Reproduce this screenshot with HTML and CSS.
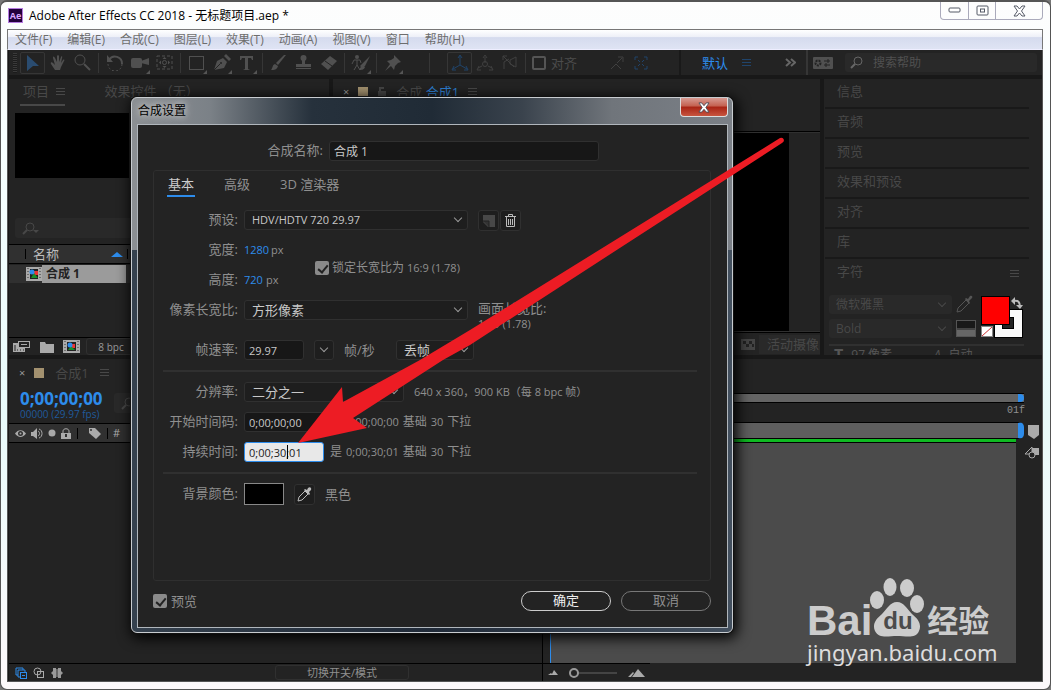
FILE: index.html
```html
<!DOCTYPE html>
<html lang="zh-CN">
<head>
    <meta charset="UTF-8">
    <meta name="viewport" content="width=device-width, initial-scale=1.0">
    <title>Adobe After Effects CC 2018</title>
    <link rel="stylesheet" href="styles.css">
</head>
<body>
<div class="window">
    <header class="titlebar">
        <span class="app-icon">Ae</span>
        <h1>Adobe After Effects CC 2018 - 无标题项目.aep *</h1>
        <div class="win-buttons">
            <button aria-label="最小化"><svg width="13" height="7"><rect x="1" y="1" width="11" height="4" rx="1" fill="#fff" stroke="#555a66"/></svg></button>
            <button aria-label="最大化"><svg width="13" height="11"><rect x="1" y="1" width="11" height="9" rx="1" fill="#fff" stroke="#555a66"/><rect x="4.500" y="4" width="4" height="3" fill="#fff" stroke="#555a66"/></svg></button>
            <button class="wide" aria-label="关闭"><svg width="13" height="12" viewBox="0 0 13 12"><path d="M1 1h3l2.500 3L9 1h3L8.500 6l3.500 5H9L6.500 8 4 11H1l3.500-5z" fill="#fff" stroke="#555a66"/></svg></button>
        </div>
    </header>

    <nav class="menubar">
        <button>文件(F)</button>
        <button>编辑(E)</button>
        <button>合成(C)</button>
        <button>图层(L)</button>
        <button>效果(T)</button>
        <button>动画(A)</button>
        <button>视图(V)</button>
        <button>窗口</button>
        <button>帮助(H)</button>
    </nav>

    <div class="app">
        <div class="toolbar">
            <div class="tools">
                <span class="grip"></span>
                <button class="tool boxed" aria-label="选取"><svg width="14" height="18"><path d="M1 1l12 11H7l-6 5z" fill="#2a4c70"/></svg></button>
                <button class="tool" aria-label="手形"><svg width="16" height="16"><path d="M5 15L1 9c-1-2 1-2 2-1l2 2L3 3c0-2 1-2 2 0l2 4V1c0-1 2-1 2 0v6l2-5c0-1 2-1 1 1l-1 5 2-3c1-1 2 0 1 1l-3 6-1 3z" fill="#505050"/></svg></button>
                <button class="tool" aria-label="缩放"><svg width="17" height="17"><circle cx="6" cy="6" r="5" fill="none" stroke="#505050"/><path d="M10 10l6 6" stroke="#505050" stroke-width="2"/></svg></button>
                <i class="sep"></i>
                <button class="tool" aria-label="旋转"><svg width="18" height="17"><path d="M3 6a7 7 0 0 1 13 4" fill="none" stroke="#505050" stroke-width="2"/><path d="M1 1v7h6z" fill="#505050"/><path d="M16 10a7 7 0 0 1-14 0" fill="none" stroke="#505050" stroke-dasharray="2 2"/></svg></button>
                <button class="tool more" aria-label="摄像机"><svg width="18" height="12"><rect y="1" width="11" height="10" rx="2" fill="#505050"/><path d="M10 4l8-3v7l-8-2z" fill="#505050"/></svg></button>
                <button class="tool" aria-label="锚点"><svg width="18" height="16"><rect x="1" y="1" width="15" height="13" fill="none" stroke="#505050" stroke-dasharray="3 2"/><circle cx="8.500" cy="7.500" r="2" fill="none" stroke="#505050"/><path d="M8.500 2l2 2h-4zM8.500 13l2-2h-4zM3 7.500l2-2v4zM14 7.500l-2-2v4z" fill="#505050"/></svg></button>
                <i class="sep"></i>
                <button class="tool more" aria-label="矩形"><svg width="17" height="16"><rect x="1.500" y="1.500" width="14" height="13" fill="none" stroke="#505050"/></svg></button>
                <button class="tool more" aria-label="钢笔"><svg width="18" height="18"><path d="M1 16L4 7l6-3 4 4-3 6z" fill="#505050"/><path d="M11 2l2-2 5 5-2 2z" fill="#505050"/><path d="M1 16l6-6" stroke="#232323"/><circle cx="8" cy="9" r="1" fill="#232323"/></svg></button>
                <button class="tool more" aria-label="文字"><svg width="15" height="16"><path d="M1 1h13v4h-1l-1-2H9v11l2 1H4l2-1V3H3L2 5H1z" fill="#505050"/></svg></button>
                <i class="sep"></i>
                <button class="tool" aria-label="画笔"><svg width="17" height="17"><path d="M16 1L8 11 6 9 14 1z" fill="#505050"/><path d="M5 10l3 2c-1 4-4 4-7 4 2-2 1-5 4-6z" fill="#505050"/></svg></button>
                <button class="tool" aria-label="仿制图章"><svg width="17" height="16"><circle cx="8.500" cy="3" r="3" fill="#505050"/><path d="M7 4h3v5h6v3H1V9h6zM1 13h15v1H1z" fill="#505050"/></svg></button>
                <button class="tool" aria-label="橡皮擦"><svg width="18" height="16"><path d="M1 9l9-8 7 5-9 9z" fill="#505050"/><path d="M5 6l7 5" stroke="#232323"/></svg></button>
                <i class="sep"></i>
                <button class="tool more" aria-label="Roto 笔刷"><svg width="20" height="16"><circle cx="6" cy="2" r="2" fill="#505050"/><path d="M1 9l2-4h6l1 3M6 5v5l-3 5M6 10l3 5" fill="none" stroke="#505050"/><path d="M19 1l-5 10-3 2-2-2 3-3z" fill="#505050"/><path d="M11 10l3 2c-1 3-4 3-6 3z" fill="#505050"/></svg></button>
                <i class="sep"></i>
                <button class="tool more" aria-label="操控点"><svg width="16" height="16"><path d="M9 0l7 7-3 1-3 3-1 4-3-4-6 5 5-7-3-3 4-1 3-2z" fill="#505050"/></svg></button>
            </div>
            <div class="axes">
                <i class="sep"></i>
                <button class="tool boxed" aria-label="本地轴"><svg width="18" height="18"><path d="M9 2v9l-7 4M9 11l7 4M7 4l2-3 2 3M3 12l-2 4h4M15 12l2 4h-4" fill="none" stroke="#20446b"/></svg></button>
                <button class="tool" aria-label="世界轴"><svg width="18" height="16"><path d="M9 2v6M6 11l-4 2M12 11l4 2M7 3l2-3 2 3M3 11l-2 4h4M15 11l2 4h-4" fill="none" stroke="#404040"/><circle cx="9" cy="9" r="2.500" fill="none" stroke="#404040"/></svg></button>
                <button class="tool" aria-label="视图轴"><svg width="16" height="16"><path d="M2 14V7l5-3M8 5l6-3v10l-6-3zM1 1l11 11M1 5V1h4" fill="none" stroke="#404040"/></svg></button>
                <i class="sep"></i>
                <label class="snap"><input type="checkbox">对齐</label>
                <svg width="14" height="14"><path d="M1 13l5-5 5 5M7 7l5-5M8 1h5v5" fill="none" stroke="#404040"/></svg>
                <svg width="14" height="14"><path d="M1 4V1h3M10 1h3v3M1 10v3h3M10 13h3v-3M4 4l2 2M10 4L8 6M4 10l2-2M10 10L8 8" fill="none" stroke="#20446b"/></svg>
            </div>
            <div class="workspace">
                <button class="ws-name">默认</button>
                <span class="burger blue"></span>
                <button class="ws-more" aria-label="更多工作区"><svg width="11" height="9"><path d="M1 1l4 3.500L1 8M6 1l4 3.500L6 8" fill="none" stroke="#666" stroke-width="2"/></svg></button>
            </div>
            <div class="help">
                <svg width="20" height="12"><rect width="20" height="12" rx="1" fill="#505050"/><circle cx="5" cy="6" r="2.500" fill="none" stroke="#232323" stroke-width="2" stroke-dasharray="2 1"/><path d="M11 4h6M15 2v4M11 8h6M13 6v4" stroke="#232323"/></svg>
                <label class="help-search">
                    <svg width="13" height="13"><circle cx="8" cy="5" r="4" fill="none" stroke="#666"/><path d="M5 8l-4 4" stroke="#666" stroke-width="2"/></svg>
                    <input type="text" placeholder="搜索帮助" aria-label="搜索帮助">
                </label>
            </div>
        </div>

        <div class="panels">
            <section class="panel project">
                <div class="tabs">
                    <span class="tab current">项目 <i class="burger"></i></span>
                    <span class="tab">效果控件 （无）</span>
                </div>
                <div class="thumb"></div>
                <label class="search"><svg width="18" height="13"><circle cx="8" cy="5" r="4" fill="none" stroke="#484848"/><path d="M5 8l-4 4" stroke="#484848" stroke-width="2"/><path d="M11 8h6l-3 3z" fill="#484848"/></svg><input type="text" aria-label="搜索"></label>
                <div class="list-head"><i></i><span>名称</span><b class="sort"></b><i></i></div>
                <div class="list-row">
                    <svg class="comp-icon" width="16" height="14"><rect width="16" height="14" fill="#aaa"/><path d="M2 1v12M14 1v12" stroke="#333" stroke-dasharray="1 2"/><rect x="4" y="2" width="8" height="10" fill="#222"/><rect x="8" y="4" width="4" height="4" fill="#e33"/><path d="M8 6l4 5H5z" fill="#1a8f2a"/><circle cx="6" cy="5" r="2.500" fill="#2d8ceb"/></svg>
                    <span>合成 1</span>
                </div>
                <div class="project-foot">
                    <svg width="18" height="13"><path d="M0 3h5v5h7v4H0z" fill="#aaa"/><path d="M2 5v6M4 10h1M7 10h1M10 10h1" stroke="#232323"/><rect x="5.500" y="1.500" width="11" height="6" fill="#232323" stroke="#aaa"/><path d="M8 4.500h6" stroke="#aaa"/></svg>
                    <svg width="14" height="12"><path d="M0 1h5l1 2h8v9H0z" fill="#aaa"/></svg>
                    <svg width="17" height="13"><rect width="17" height="13" fill="#aaa"/><path d="M2 1v11M15 1v11" stroke="#333" stroke-dasharray="1 2"/><rect x="4" y="2" width="9" height="9" fill="#222"/><rect x="8" y="4" width="4" height="4" fill="#e33"/><path d="M8 6l4 4H5z" fill="#1a8f2a"/><circle cx="7" cy="5" r="2.500" fill="#2d8ceb"/></svg>
                    <button>8 bpc</button>
                </div>
            </section>

            <section class="panel comp">
                <div class="comp-tabs">
                    <span class="close-x">×</span><i class="swatch"></i>
                    <svg width="10" height="12"><rect x="1" y="5" width="8" height="6" fill="#454545"/><path d="M3 5V2h4" fill="none" stroke="#454545" stroke-width="2"/></svg>
                    <span>合成 <b>合成1</b></span> <i class="burger"></i>
                </div>
                <div class="viewer"></div>
                <div class="comp-foot">
                    <svg width="14" height="11"><rect width="14" height="11" fill="#444"/><path d="M2 2h3v3H2zM8 2h3v3H8zM5 5h3v3H5zM11 5h2v3h-2z" fill="#222"/></svg>
                    <button>活动摄像</button>
                </div>
            </section>

            <section class="panel side">
                <h2>信息</h2>
                <h2>音频</h2>
                <h2>预览</h2>
                <h2>效果和预设</h2>
                <h2>对齐</h2>
                <h2>库</h2>
                <h2 class="open">字符 <i class="burger"></i></h2>
                <div class="character">
                    <div class="fonts">
                        <span class="select"><select aria-label="字体"><option>微软雅黑</option></select></span>
                        <span class="select"><select aria-label="样式"><option>Bold</option></select></span>
                    </div>
                    <div class="picks">
                        <svg width="17" height="18"><path d="M1 17l1-4 8-8 3 3-8 8z" fill="none" stroke="#555"/><path d="M9 4l1-1 2 1 2-3c2-1 3 1 2 2l-3 3 1 2-1 1z" fill="#555"/></svg>
                        <span class="bw"></span>
                    </div>
                    <svg class="fill-stroke" width="44" height="44"><rect x="14.500" y="14.500" width="28" height="28" fill="#fafafa" stroke="#000"/><rect x="22.500" y="22.500" width="11" height="11" fill="#232323" stroke="#000"/><rect x="1.500" y="1.500" width="28" height="28" fill="#f00" stroke="#000"/><rect x="1.500" y="31.500" width="11" height="10" fill="#fff" stroke="#888"/><path d="M2 41L12 32" stroke="#c33"/><path d="M34 6c4-1 6 1 6 6" fill="none" stroke="#bbb" stroke-width="2"/><path d="M35 2v8l-4-4zM36 10h7l-3 4z" fill="#bbb"/></svg>
                </div>
                <div class="metrics"><b>T</b><span>97 像素</span><i>–</i><em>A</em><span>自动</span><i>–</i></div>
            </section>
        </div>

        <section class="timeline">
            <div class="layers">
                <div class="comp-tabs"><span class="close-x">×</span><i class="swatch"></i><span>合成1</span><i class="burger"></i></div>
                <div class="time">
                    <div><strong>0;00;00;00</strong><small>00000 (29.97 fps)</small></div>
                    <label class="search"><svg width="13" height="13"><circle cx="8" cy="5" r="4" fill="none" stroke="#484848"/><path d="M5 8l-4 4" stroke="#484848" stroke-width="2"/></svg><input type="text" aria-label="搜索图层"></label>
                </div>
                <div class="switches">
                    <svg width="11" height="9"><path d="M0 4.500C3 0 8 0 11 4.500 8 9 3 9 0 4.500z" fill="#aaa"/><circle cx="5.500" cy="4.500" r="2.500" fill="#303030"/><circle cx="5.500" cy="4.500" r="1" fill="#aaa"/></svg>
                    <svg width="12" height="11"><path d="M0 4h2l4-4v11L2 8H0z" fill="#aaa"/><path d="M7 3c2 1 2 4 0 5M8 1c4 1 4 8 0 9" fill="none" stroke="#aaa"/></svg>
                    <svg width="8" height="8"><circle cx="4" cy="4" r="3.500" fill="#aaa"/></svg>
                    <svg width="10" height="11"><rect y="5" width="10" height="6" fill="#aaa"/><path d="M2 5V3c0-3 6-3 6 0v2" fill="none" stroke="#aaa"/><path d="M5 6v3" stroke="#303030" stroke-width="2"/></svg>
                    <i></i>
                    <svg width="13" height="13"><path d="M1 1h6l6 6-5 5-7-6z" fill="#aaa"/><circle cx="3" cy="3" r="1" fill="#303030"/></svg>
                    <i></i>
                    <span>#</span>
                </div>
                <div class="layer-list"></div>
                <div class="layer-foot">
                    <svg width="12" height="12"><path d="M8 3V1H1v7h2" fill="none" stroke="#2d8ceb"/><path d="M10 5V3H3v7h2" fill="none" stroke="#2d8ceb"/><rect x="5.500" y="5.500" width="6" height="6" fill="none" stroke="#2d8ceb"/><path d="M7 8h3v1H7z" fill="#2d8ceb"/></svg>
                    <svg width="12" height="12"><circle cx="4.500" cy="4.500" r="3.500" fill="none" stroke="#aaa"/><rect x="4.500" y="4.500" width="6" height="6" fill="none" stroke="#aaa"/></svg>
                    <svg width="12" height="12"><path d="M2 1h3v10H2V8L0 6l2-2zM10 1H7v10h3V8l2-2-2-2z" fill="#999"/><path d="M5 2h2v8H5z" fill="#666"/></svg>
                    <button>切换开关/模式</button>
                </div>
            </div>
            <div class="tracks">
                <div class="navigator"><span></span></div>
                <div class="ruler">01f</div>
                <div class="workarea"><span></span><svg width="11" height="14"><path d="M0 0h11v10l-5 4-6-4z" fill="#aaa"/></svg></div>
                <div class="track-body">
                    <div class="track-gray"></div>
                    <svg width="15" height="14"><rect x="7" y="2" width="7" height="7" fill="#aaa"/><path d="M0 8l7-7v7z" fill="#232323" stroke="#aaa"/><circle cx="7" cy="9" r="3" fill="#232323" stroke="#aaa"/></svg>
                </div>
                <div class="zoomer">
                    <svg width="10" height="5"><path d="M0 5l3-2 1 1 2-4 4 5z" fill="#aaa"/></svg>
                    <input type="range" min="0" max="100" value="0" aria-label="缩放">
                    <svg width="17" height="8"><path d="M0 8l5-5 1 1-3 4zM4 8l6-8 7 8z" fill="#aaa"/></svg>
                </div>
            </div>
        </section>
    </div>

    <div class="dialog" role="dialog" aria-labelledby="dlg-title">
        <div class="dialog-title">
            <h2 id="dlg-title">合成设置</h2>
            <button aria-label="关闭"><svg width="12" height="11" viewBox="0 0 13 12"><path d="M1 1h3l2.500 3L9 1h3L8.500 6l3.500 5H9L6.500 8 4 11H1l3.500-5z" fill="#fff" stroke="#4a4f5c"/></svg></button>
        </div>
        <form class="dialog-body">
            <div class="name-row">
                <label for="name">合成名称:</label>
                <input id="name" type="text" value="合成 1">
            </div>
            <div class="settings">
                <div class="dlg-tabs">
                    <button type="button" class="on">基本</button>
                    <button type="button">高级</button>
                    <button type="button">3D 渲染器</button>
                </div>
                <div class="row">
                    <label for="preset">预设:</label>
                    <div>
                        <span class="select w-full"><select id="preset"><option>HDV/HDTV 720 29.97</option></select></span>
                        <span class="pair">
                            <button type="button" class="sq" aria-label="保存预设"><svg width="13" height="13"><path d="M1 1h12v12H6L1 8z" fill="#484848"/><path d="M1 7h6v6" fill="#333" stroke="#232323"/></svg></button>
                            <button type="button" class="sq" aria-label="删除预设"><svg width="11" height="13"><path d="M0 2.500h11M3.500 2V.500h4V2M1.500 3v9.500h8V3M3.500 5v6M5.500 5v6M7.500 5v6" fill="none" stroke="#bbb"/></svg></button>
                        </span>
                    </div>
                </div>
                <div class="size">
                    <div>
                        <div class="row"><label for="w">宽度:</label><div><input id="w" class="num wide-num" value="1280"><span>px</span></div></div>
                        <div class="row"><label for="h">高度:</label><div><input id="h" class="num" value="720"><span>px</span></div></div>
                    </div>
                    <label class="check"><input type="checkbox" checked>锁定长宽比为 <small>16:9 (1.78)</small></label>
                </div>
                <div class="row">
                    <label for="par">像素长宽比:</label>
                    <div>
                        <span class="select w-full"><select id="par" class="cjk"><option>方形像素</option></select></span>
                        <span class="frame-ratio">画面长宽比:<small>16:9 (1.78)</small></span>
                    </div>
                </div>
                <div class="row rate">
                    <label for="fps">帧速率:</label>
                    <div>
                        <input id="fps" type="text" value="29.97">
                        <span class="select w-mini"><select aria-label="帧速率预设"><option></option></select></span>
                        <span class="unit">帧/秒</span>
                        <span class="select w-drop"><select class="cjk" aria-label="丢帧"><option>丢帧</option></select></span>
                    </div>
                </div>
                <hr>
                <div class="row">
                    <label for="res">分辨率:</label>
                    <div>
                        <span class="select w-res"><select id="res" class="cjk"><option>二分之一</option></select></span>
                        <small>640 x 360，900 KB（每 8 bpc 帧）</small>
                    </div>
                </div>
                <div class="row">
                    <label for="start">开始时间码:</label>
                    <div><input id="start" class="tc" type="text" value="0;00;00;00"><span class="after">是 <small>0;00;00;00</small> 基础 <small>30</small> 下拉</span></div>
                </div>
                <div class="row">
                    <label for="dur">持续时间:</label>
                    <div><span class="caret"><input id="dur" class="tc active" type="text" value="0;00;30;01"></span><span class="after">是 <small>0;00;30;01</small> 基础 <small>30</small> 下拉</span></div>
                </div>
                <hr>
                <div class="row last">
                    <label for="bg">背景颜色:</label>
                    <div>
                        <button type="button" id="bg" class="color" aria-label="背景颜色"></button>
                        <button type="button" class="sq" aria-label="吸管"><svg width="15" height="16"><path d="M1 15l1-4 6-6 3 3-6 6z" fill="none" stroke="#bbb"/><path d="M7 4l1-1 2 1 1-2c2-2 4 0 3 2l-2 2 1 2-1 1z" fill="#bbb"/></svg></button>
                        <span>黑色</span>
                    </div>
                </div>
            </div>
            <div class="dialog-foot">
                <label class="check"><input type="checkbox" checked>预览</label>
                <button type="button" class="ok">确定</button>
                <button type="button">取消</button>
            </div>
        </form>
    </div>

    <div class="watermark">
        <div class="logo">
            <span class="bai">Bai</span>
            <span class="paw">
                <svg width="56" height="60" viewBox="0 0 56 60"><g fill="#ccc"><ellipse cx="7" cy="22" rx="7" ry="9"/><ellipse cx="20" cy="9" rx="6.500" ry="9"/><ellipse cx="37" cy="10" rx="7" ry="9"/><ellipse cx="47" cy="26" rx="7" ry="9"/><path d="M27 24c7 0 10 7 15 12 6 5 10 10 7 17-3 8-13 5-22 5s-18 3-22-5c-3-7 1-12 7-17 5-5 8-12 15-12z"/></g></svg>
                <span class="du">du</span>
            </span>
            <span class="jy">经验</span>
        </div>
        <div class="url">jingyan.baidu.com</div>
    </div>

    <svg class="arrow" width="490" height="310" viewBox="296 136 490 310" aria-hidden="true">
        <path d="M298 443L342 387l1 15L420 360 470 330 780 138q3-1 4 2 0 2-2 3L470 345 443 360 353 418l14 10z" fill="#ed1c24"/>
    </svg>
</div>
</body>
</html>
```
FILE: styles.css
```css
* {
    margin: 0;
    padding: 0;
    box-sizing: border-box;
}
body {
    font-family: "Open Sans", "Noto Sans CJK SC", sans-serif;
    font-size: 13px;
    line-height: 18px;
    color: #8f8f8f;
    background: #777;
}
button, input, select {
    font: inherit;
    color: inherit;
    background: none;
    border: 0;
    min-width: 0;
    outline: none;
}
h1, h2, strong {
    font-weight: normal;
}
svg {
    display: block;
    flex: none;
}
.window {
    position: relative;
    display: flex;
    flex-direction: column;
    height: 100vh;
    min-height: 690px;
    padding: 0 7px 7px 6px;
    border: 1px solid #555;
    border-top-width: 2px;
    border-radius: 7px;
    background: linear-gradient(#fdfdfd, #f7ffff 20%, #e8fafa 60%, #fdf9fb);
    overflow: hidden;
}

/* title bar */
.titlebar {
    display: flex;
    align-items: center;
    height: 27px;
    padding-left: 1px;
    flex: none;
}
.app-icon {
    width: 15px;
    height: 15px;
    background: #24003d;
    border: 1px solid #b57be0;
    color: #d9a6ff;
    font-size: 9px;
    line-height: 13px;
    text-align: center;
    font-weight: bold;
}
h1 {
    flex: 1;
    margin-left: 6px;
    font-size: 12px;
    color: #000;
}
.win-buttons {
    display: flex;
    align-self: flex-start;
    height: 18px;
    border: 1px solid #aab;
    border-top: 0;
    border-radius: 0 0 4px 4px;
}
.win-buttons button {
    display: flex;
    justify-content: center;
    align-items: center;
    width: 27px;
}
.win-buttons button + button {
    border-left: 1px solid #aab;
}
.win-buttons .wide {
    width: 47px;
}

.menubar {
    display: flex;
    flex: none;
    gap: 15px;
    height: 21px;
    padding-left: 7px;
    border: 1px solid #777;
    border-bottom-color: #eef;
    background: linear-gradient(#fff, #eef0f8 35%, #d5dbee 40%, #dfe4f4);
    font-size: 12px;
    color: #6d6d6d;
}

/* application area */
.app {
    flex: 1;
    display: flex;
    flex-direction: column;
    gap: 4px;
    min-height: 0;
    padding-left: 1px;
    border: 1px solid #555;
    border-top: 0;
    background: #181818;
}
.toolbar {
    display: flex;
    height: 25px;
    background: #232323;
    color: #4c4c4c;
}
.toolbar > div {
    display: flex;
    align-items: center;
}
.tools {
    width: 400px;
}
.grip {
    width: 4px;
    height: 20px;
    margin: 0 3px 0 4px;
    background: repeating-linear-gradient(#3a3a3a 0 1px, #1c1c1c 1px 2px);
}
.tool {
    position: relative;
    display: flex;
    justify-content: center;
    align-items: center;
    width: 25px;
    height: 22px;
    flex: none;
}
.boxed {
    border: 1px solid #363636;
    border-radius: 2px;
}
.more::after {
    content: "";
    position: absolute;
    right: 2px;
    bottom: 0;
    border: 2px solid;
    border-color: transparent #555 #555 transparent;
}
.sep {
    width: 1px;
    height: 20px;
    margin: 0 3px;
    background: #363636;
    flex: none;
}
.axes {
    flex: 1;
    padding-left: 17px;
}
.axes .boxed {
    margin-left: 14px;
}
.axes .sep + .snap {
    margin: 0 33px 0 3px;
}
.axes > svg {
    margin-right: 10px;
}
.snap {
    display: flex;
    align-items: center;
    gap: 5px;
}
.snap input {
    appearance: none;
    width: 14px;
    height: 14px;
    border: 2px solid #555;
    border-radius: 2px;
}
.workspace {
    width: 127px;
    border-left: 2px solid #191919;
    padding-left: 21px;
}
.ws-name {
    color: #2d8ceb;
}
.ws-more {
    margin-left: auto;
    padding-right: 10px;
}
.burger {
    display: inline-block;
    width: 9px;
    height: 8px;
    margin-left: 8px;
    background: repeating-linear-gradient(currentColor 0 1px, transparent 1px 3px);
}
.blue {
    color: #20446b;
    margin-left: 14px;
}
.help {
    width: 236px;
    gap: 12px;
    padding: 0 5px;
    border-left: 2px solid #363636;
}
.help-search {
    flex: 1;
    display: flex;
    align-items: center;
    gap: 10px;
    height: 19px;
    padding: 0 5px;
    border-radius: 3px;
    background: #292929;
}
.help-search input {
    flex: 1;
    font-size: 12px;
}
::placeholder {
    color: #505050;
}

.panels {
    display: grid;
    grid-template-columns: 320px 1fr 218px;
    gap: 4px;
    height: 276px;
    flex: none;
}
.panel {
    display: flex;
    flex-direction: column;
    background: #232323;
    color: #484848;
    overflow: hidden;
    min-width: 0;
}
.tabs {
    display: flex;
    gap: 36px;
    height: 27px;
    padding-left: 11px;
}
.tab {
    padding: 3px 0 3px 3px;
    white-space: nowrap;
}
.current {
    border-bottom: 2px solid #484848;
}
.current .burger {
    margin-left: 4px;
}
.thumb {
    width: 114px;
    height: 65px;
    margin: 7px 6px 40px;
    background: #000;
}
.search {
    display: flex;
    align-items: center;
    height: 20px;
    margin-left: 6px;
    padding-left: 7px;
    border-radius: 3px;
    background: #292929;
}
.list-head {
    display: flex;
    align-items: center;
    height: 20px;
    margin-top: 6px;
    padding: 0 4px 0 16px;
    border: solid #000;
    border-width: 1px 0;
    background: #303030;
    color: #bbb;
}
.list-head i {
    width: 1px;
    height: 10px;
    background: #000;
}
.list-head span {
    width: 85px;
    padding-left: 7px;
}
.sort {
    border: 6px solid transparent;
    border-top: 0;
    border-bottom: 5px solid #2d8ceb;
    margin-right: 4px;
}
.list-row {
    display: flex;
    align-items: center;
    height: 18px;
    margin-top: 1px;
    padding-left: 17px;
    background: #303030;
}
.list-row span {
    width: 84px;
    height: 18px;
    padding-left: 4px;
    background: #9b9b9b;
    color: #222;
    font-size: 12px;
    font-weight: bold;
}
.project-foot {
    display: flex;
    align-items: center;
    gap: 9px;
    height: 18px;
    margin-top: auto;
    padding-left: 4px;
    border-top: 1px solid #000;
    color: #999;
}
.project-foot button {
    width: 60px;
    height: 17px;
    padding-right: 10px;
    margin-left: -3px;
    border: 1px solid #303030;
    border-radius: 3px;
    font-size: 10px;
    line-height: 14px;
}
.comp-tabs {
    display: flex;
    align-items: center;
    gap: 9px;
    height: 25px;
    padding-left: 10px;
    color: #484848;
    flex: none;
}
.comp-tabs b {
    color: #2d7fd2;
    font-weight: normal;
}
.comp-tabs .burger {
    margin: 0;
}
.close-x {
    color: #999;
    font-size: 11px;
}
.swatch {
    width: 10px;
    height: 10px;
    background: #a3916f;
}
.viewer {
    flex: 1;
    margin-top: 27px;
    background: linear-gradient(90deg, #000 calc(100% - 31px), #232323 0);
    border: solid #000;
    border-width: 1px 0;
    box-shadow: inset 0 1px #303030, inset 0 -1px #303030;
}
.comp-foot {
    display: flex;
    align-items: center;
    justify-content: flex-end;
    gap: 4px;
    height: 22px;
}
.comp-foot button {
    width: 61px;
    height: 19px;
    padding-left: 8px;
    overflow: hidden;
    white-space: nowrap;
    background: #292929;
    text-align: left;
}
.side h2 {
    flex: none;
    height: 30px;
    margin: 0 13px 0 1px;
    padding: 3px 12px;
    font-size: 13px;
    border-bottom: 2px solid #191919;
}
.side .open {
    display: flex;
    justify-content: space-between;
    border: 0;
    padding-right: 10px;
    height: 36px;
}
.side .open .burger {
    margin-top: 8px;
}
.character {
    display: flex;
    gap: 4px;
    padding-left: 5px;
    height: 46px;
    flex: none;
}
.fonts {
    display: flex;
    flex-direction: column;
    gap: 5px;
    width: 123px;
}
.fonts .select {
    height: 19px;
}
.picks {
    display: flex;
    flex-direction: column;
    gap: 7px;
}
.bw {
    width: 20px;
    height: 17px;
    border: 1px solid #555;
    background: linear-gradient(#191919 50%, #444 50% 60%, #666 60%);
}
.metrics {
    display: flex;
    align-items: flex-start;
    flex: none;
    gap: 8px;
    margin: 3px 18px 0 5px;
    padding: 0 5px;
    border-top: 2px solid #303030;
    color: #555;
    font-size: 12px;
}
.metrics b {
    font-size: 16px;
}
.metrics i {
    margin: 0 14px 0 6px;
}

/* timeline */
.timeline {
    flex: 1;
    min-height: 0;
    display: grid;
    grid-template-columns: 534px 1fr;
    background: #232323;
}
.layers, .tracks {
    display: flex;
    flex-direction: column;
    min-width: 0;
}
.layers {
    border-right: 1px solid #000;
}
.timeline .comp-tabs {
    height: 28px;
    gap: 11px;
}
.timeline .close-x {
    margin-right: -2px;
}
.time {
    display: flex;
    justify-content: space-between;
    height: 36px;
    padding: 3px 0 0 11px;
}
.time strong {
    display: block;
    font-size: 17px;
    font-weight: bold;
    line-height: 18px;
    color: #2d8ceb;
}
.time small {
    display: block;
    font-size: 10px;
    line-height: 12px;
    color: #205a9b;
}
.time .search {
    width: 428px;
    margin-top: 3px;
}
.switches {
    display: flex;
    align-items: center;
    gap: 5px;
    height: 20px;
    padding-left: 6px;
    border: solid #000;
    border-width: 1px 0;
    background: #303030;
    font-size: 11px;
    color: #aaa;
    flex: none;
}
.switches i {
    width: 1px;
    height: 11px;
    margin: 0 5px 0 1px;
    background: #000;
}
.switches i + span {
    margin-left: -5px;
}
.layer-list {
    flex: 1;
}
.layer-foot {
    display: flex;
    align-items: center;
    gap: 6px;
    height: 18px;
    padding-left: 6px;
    border-top: 1px solid #000;
    flex: none;
}
.layer-foot button {
    width: 134px;
    height: 15px;
    margin-left: 206px;
    border: 1px solid #303030;
    border-radius: 3px;
    font-size: 11px;
    line-height: 12px;
}
.navigator {
    height: 10px;
    margin: 34px 18px 0 8px;
    border: solid #000;
    border-width: 1px 0;
    background: #646464;
}
.navigator span, .workarea span {
    display: block;
    height: 100%;
    border-right: 6px solid #2d8ceb;
    border-radius: 0 5px 5px 0;
}
.ruler {
    height: 19px;
    margin-right: 17px;
    padding-top: 1px;
    text-align: right;
    font: 10px/14px "Liberation Mono", monospace;
}
.workarea {
    display: flex;
    gap: 4px;
    height: 17px;
    margin: 0 3px 0 8px;
}
.workarea span {
    flex: 1;
    height: 17px;
    border-top: 1px solid #000;
    border-bottom: 1px solid #000;
    background: #5e5e5e;
}
.workarea svg {
    margin-top: 3px;
}
.track-body {
    flex: 1;
    display: flex;
    justify-content: space-between;
    margin-left: 7px;
    border-left: 1px solid #2d8ceb;
}
.track-gray {
    flex: 1;
    margin-right: 9px;
    border-top: 3px solid #0fba22;
    background: #4b4b4b;
    box-shadow: inset 0 1px #000;
}
.track-body svg {
    margin: 7px 2px 0 0;
}
.zoomer {
    display: flex;
    align-items: center;
    gap: 11px;
    width: 107px;
    height: 18px;
    padding: 0 5px;
    border-top: 1px solid #000;
    flex: none;
}
.zoomer input {
    appearance: none;
    width: 48px;
    height: 2px;
    background: #444;
}
.zoomer input::-webkit-slider-thumb {
    appearance: none;
    width: 10px;
    height: 10px;
    border: 2px solid #999;
    border-radius: 50%;
    background: #232323;
}

/* composition settings dialog */
.dialog {
    position: absolute;
    left: 130px;
    top: 95px;
    width: 602px;
    padding: 0 4px 4px 5px;
    border: 1px solid #c8ccd0;
    border-radius: 6px;
    background: linear-gradient(90deg, #8b8f93, #7b8187 13%, #26313c 30%, #202b36 50%, #3a434d 65%, #70757b 80%, #7b8087);
    box-shadow: 0 0 0 1px #111, 2px 3px 14px 2px #000;
}
.dialog::before {
    content: "";
    position: absolute;
    inset: 152px 0 0;
    border-radius: 0 0 5px 5px;
    background: linear-gradient(90deg, #35414e, #202a38 50%, #43505f);
}
.dialog-title {
    display: flex;
    justify-content: space-between;
    align-items: flex-start;
    height: 26px;
}
.dialog-title h2 {
    padding: 4px 1px;
    font-size: 12px;
    color: #000;
    text-shadow: 0 0 6px #ccc, 0 0 8px #ccc;
}
.dialog-title button {
    display: flex;
    justify-content: center;
    align-items: center;
    width: 48px;
    height: 19px;
    border: 1px solid #ddd;
    border-top: 0;
    border-radius: 0 0 4px 4px;
    background: linear-gradient(#d79a92, #c4604f 45%, #a82314 50%, #c8553f);
}
.dialog-body {
    position: relative;
    padding: 16px 16px 16px 15px;
    border: 1px solid #b0b6bc;
    background: #232323;
}
.dialog input[type="text"] {
    height: 20px;
    padding: 0 4px;
    border: 1px solid #303030;
    border-radius: 3px;
    background: #171717;
    color: #c8c8c8;
    font-size: 11px;
}
.name-row {
    display: grid;
    grid-template-columns: 170px 270px;
    gap: 6px;
}
.name-row label, .row > label {
    text-align: right;
}
.dialog .name-row input {
    font-size: 12px;
}
.settings {
    height: 411px;
    margin-top: 9px;
    border: 1px solid #2f2f2f;
    border-radius: 3px;
}
.dlg-tabs {
    display: flex;
    gap: 28px;
    height: 34px;
    padding: 3px 0 0 13px;
}
.dlg-tabs button {
    height: 23px;
    padding: 0 1px 3px;
    line-height: 18px;
}
.dlg-tabs .on {
    padding-bottom: 1px;
    color: #ccc;
    border-bottom: 2px solid #2d8ceb;
}
.row {
    display: grid;
    grid-template-columns: 84px 1fr;
    gap: 6px;
    align-items: center;
    min-height: 30px;
}
.row > div {
    display: flex;
    align-items: center;
    gap: 10px;
    height: 30px;
}
.row > label {
    padding-bottom: 3px;
}
.select {
    position: relative;
    display: block;
    height: 20px;
    flex: none;
}
.select select {
    appearance: none;
    width: 100%;
    height: 100%;
    padding: 0 7px;
    border: 1px solid #303030;
    border-radius: 3px;
    background: #1e1e1e;
    color: #c8c8c8;
    font-size: 11px;
    display: block;
}
.select .cjk {
    font-size: 13px;
    line-height: 16px;
}
.select::after {
    content: "";
    position: absolute;
    right: 7px;
    top: 5px;
    width: 5px;
    height: 5px;
    border: solid #999;
    border-width: 0 1px 1px 0;
    transform: rotate(45deg);
}
.fonts .select select {
    border: 0;
    background: #292929;
    color: #484848;
    font-size: 12px;
}
.fonts .select::after {
    border-color: #484848;
}
.w-full {
    width: 224px;
}
.w-mini {
    width: 20px;
}
.w-drop {
    width: 78px;
}
.w-res {
    width: 160px;
}
.pair {
    display: flex;
    gap: 1px;
}
.sq {
    display: flex;
    justify-content: center;
    align-items: center;
    width: 21px;
    height: 21px;
    border: 1px solid #303030;
    border-radius: 3px;
    background: #1e1e1e;
}
.size {
    display: flex;
    align-items: center;
}
.size > div {
    width: 161px;
}
.size .row > div {
    gap: 2px;
    font-size: 11px;
}
.num {
    width: 20px;
    color: #2d8ceb;
}
.wide-num {
    width: 25px;
}
.check {
    display: flex;
    align-items: center;
    gap: 4px;
}
.check input {
    position: relative;
    appearance: none;
    width: 14px;
    height: 14px;
    border-radius: 2px;
    background: #8a8a8a;
}
.check input::after {
    content: "";
    position: absolute;
    left: 5px;
    top: 2px;
    width: 4px;
    height: 8px;
    border: solid #222;
    border-width: 0 2px 2px 0;
    transform: rotate(40deg);
}
small {
    font-size: 11px;
}
.size .check {
    gap: 3px;
    padding-top: 6px;
    font-size: 12px;
}
.frame-ratio {
    padding-top: 12px;
    line-height: 16px;
}
.frame-ratio small {
    display: block;
}
.rate {
    margin-top: 10px;
}
#fps {
    width: 60px;
}
.unit {
    width: 42px;
}
hr {
    border: 0;
    height: 2px;
    margin: 5px 13px 5px 9px;
    background: #303030;
}
.dialog .tc {
    width: 80px;
}
.row .after {
    display: flex;
    gap: 4px;
    margin-left: -4px;
    font-size: 12px;
    white-space: nowrap;
}
.dialog input.active {
    border-color: #2d8ceb;
    background: #e8e8e8;
    color: #222;
}
.caret {
    position: relative;
    display: block;
    height: 20px;
}
.caret input {
    display: block;
}
.caret::after {
    content: "";
    position: absolute;
    left: 43px;
    top: 3px;
    width: 1px;
    height: 14px;
    background: #000;
}
.last {
    margin-top: 5px;
}
.color {
    width: 40px;
    height: 22px;
    border: 1px solid #888;
    background: #000;
}
.dialog-foot {
    display: flex;
    align-items: center;
    gap: 10px;
    margin-top: 10px;
}
.dialog-foot .check {
    margin-right: auto;
}
.dialog-foot button {
    width: 90px;
    height: 20px;
    padding-bottom: 2px;
    border: 1px solid #777;
    border-radius: 10px;
    line-height: 16px;
}
.dialog-foot .ok {
    border-color: #ccc;
    color: #eee;
}

.watermark {
    position: absolute;
    left: 806px;
    top: 576px;
    color: #ccc;
}
.logo {
    display: flex;
    align-items: flex-end;
    height: 60px;
}
.bai {
    height: 38px;
    font: bold 42px/42px "Liberation Sans", sans-serif;
}
.paw {
    position: relative;
    margin-left: -2px;
}
.du {
    position: absolute;
    left: 13px;
    top: 30px;
    font: bold 24px/26px "Liberation Sans", sans-serif;
    color: #4b4b4b;
}
.jy {
    margin-left: 1px;
    font: bold 31px/38px "Noto Sans CJK SC", sans-serif;
}
.url {
    font: 22px/29px "Noto Sans", sans-serif;
    color: #ddd;
}
.arrow {
    position: absolute;
    left: 295px;
    top: 134px;
    pointer-events: none;
}
```
